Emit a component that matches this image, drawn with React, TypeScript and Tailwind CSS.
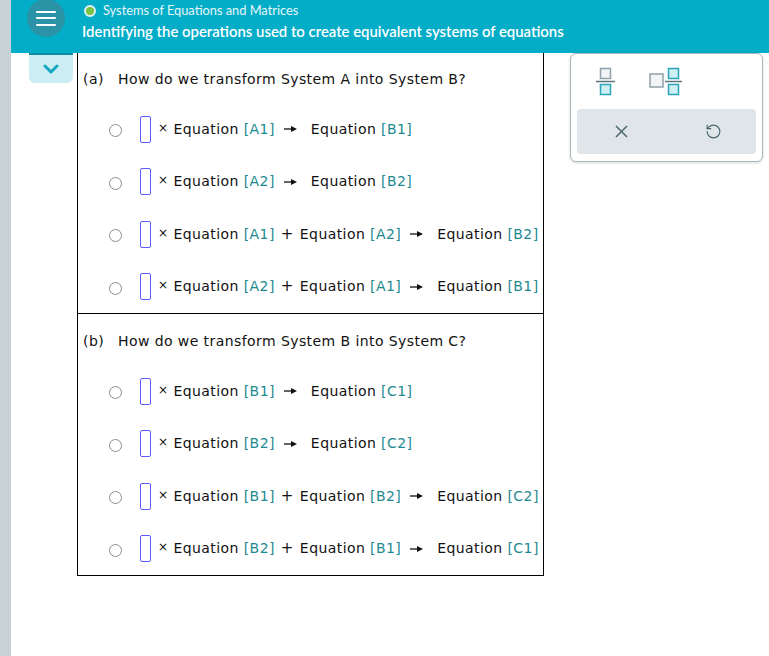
import { RotateCcw } from "lucide-react";

type Part = { eq: string } | { op: "+" } | { arrow: true };

type Row = Part[];

const sectionA: Row[] = [
  [{ eq: "A1" }, { arrow: true }, { eq: "B1" }],
  [{ eq: "A2" }, { arrow: true }, { eq: "B2" }],
  [{ eq: "A1" }, { op: "+" }, { eq: "A2" }, { arrow: true }, { eq: "B2" }],
  [{ eq: "A2" }, { op: "+" }, { eq: "A1" }, { arrow: true }, { eq: "B1" }],
];

const sectionB: Row[] = [
  [{ eq: "B1" }, { arrow: true }, { eq: "C1" }],
  [{ eq: "B2" }, { arrow: true }, { eq: "C2" }],
  [{ eq: "B1" }, { op: "+" }, { eq: "B2" }, { arrow: true }, { eq: "C2" }],
  [{ eq: "B2" }, { op: "+" }, { eq: "B1" }, { arrow: true }, { eq: "C1" }],
];

function Arrow() {
  return (
    <svg width="14" height="8" viewBox="0 0 14 8" className="ml-[9px] mr-[13px]">
      <line x1="0" y1="4" x2="9" y2="4" stroke="#111" strokeWidth="1.3" />
      <path d="M7 1 L13 4 L7 7 Z" fill="#111" />
    </svg>
  );
}

function Equation({ id }: { id: string }) {
  return (
    <span>
      Equation <span className="text-[#1e8a8f]">[{id}]</span>
    </span>
  );
}

function OptionRow({ row }: { row: Row }) {
  return (
    <div className="flex h-[52.5px] items-center pl-[31px]">
      <span className="mt-[3px] h-[13px] w-[13px] rounded-full border border-[#8c8c8c] bg-white" />
      <span className="ml-[18px] h-[27px] w-[11px] rounded-[2px] border border-[#5a5aff]" />
      <span className="mb-[3px] ml-[7px] mr-[5px] text-[12px]">×</span>
      {row.map((p, i) => {
        if ("eq" in p) return <Equation key={i} id={p.eq} />;
        if ("op" in p) return <span key={i} className="mx-[6px] text-[15px] leading-none">+</span>;
        return <Arrow key={i} />;
      })}
    </div>
  );
}

function Section({ label, title, rows, divider }: { label: string; title: string; rows: Row[]; divider?: boolean }) {
  return (
    <div className={divider ? "border-t border-black pt-[17px]" : "pt-[16px]"}>
      <div className="flex h-[20px] items-center pl-[5px]">
        <span className="w-[35px]">({label})</span>
        <span>{title}</span>
      </div>
      <div className="mt-[14px]">
        {rows.map((r, i) => (
          <OptionRow key={i} row={r} />
        ))}
      </div>
    </div>
  );
}

function FractionIcon() {
  return (
    <svg width="20" height="30" viewBox="0 0 20 30">
      <rect x="4.5" y="1.5" width="10" height="10" fill="#f2f5f6" stroke="#8fa1a8" strokeWidth="1.5" />
      <line x1="0" y1="14.5" x2="19" y2="14.5" stroke="#5d737b" strokeWidth="1.5" />
      <rect x="4.5" y="17.5" width="10" height="10" fill="#cdeef3" stroke="#2aa6b8" strokeWidth="1.5" />
    </svg>
  );
}

function MixedIcon() {
  return (
    <svg width="34" height="30" viewBox="0 0 34 30">
      <rect x="1" y="7" width="13" height="13" fill="#f2f5f6" stroke="#8fa1a8" strokeWidth="1.5" />
      <rect x="19.5" y="1.5" width="10" height="10" fill="#cdeef3" stroke="#2aa6b8" strokeWidth="1.5" />
      <line x1="16" y1="14.5" x2="33" y2="14.5" stroke="#5d737b" strokeWidth="1.5" />
      <rect x="19.5" y="17.5" width="10" height="10" fill="#cdeef3" stroke="#2aa6b8" strokeWidth="1.5" />
    </svg>
  );
}

export default function App() {
  return (
    <div className="flex h-[656px] w-[769px] overflow-hidden bg-white">
      <div className="w-[11px] shrink-0 bg-[#c7d2d7]" />
      <div className="flex min-w-0 flex-1 flex-col">
        <header className="flex h-[53px] shrink-0 items-start bg-[#03acc7] font-['Lato',sans-serif] text-white">
          <div className="ml-[16px] mt-[-1px] flex h-[38px] w-[38px] flex-col items-center justify-center gap-[4.5px] rounded-full bg-[#2b93a6]">
            <span className="h-[2px] w-[20px] rounded bg-white" />
            <span className="h-[2px] w-[20px] rounded bg-white" />
            <span className="h-[2px] w-[20px] rounded bg-white" />
          </div>
          <div className="ml-[17px] flex flex-col">
            <div className="mt-[3px] flex h-[16px] items-center">
              <span className="ml-[2px] h-[12px] w-[12px] rounded-full border-2 border-[#dff3f6] bg-[#7bc142]" />
              <span className="ml-[7px] text-[12.8px] text-[#e6f7fa]">Systems of Equations and Matrices</span>
            </div>
            <div className="mt-[2px] text-[14.9px] font-semibold leading-[20px]">
              Identifying the operations used to create equivalent systems of equations
            </div>
          </div>
        </header>

        <div className="flex items-start">
          <div className="ml-[18px] flex h-[30px] w-[44px] items-center justify-center rounded-b-[6px] border-t-2 border-[#0c8ba0] bg-[#ccedf2]">
            <svg width="16" height="10" viewBox="0 0 16 10">
              <path d="M2 2 L8 8 L14 2" fill="none" stroke="#12a6c0" strokeWidth="3" strokeLinecap="round" strokeLinejoin="round" />
            </svg>
          </div>
          <div className="ml-[4px] w-[467px] border-x border-b border-black font-['DejaVu_Sans',sans-serif] text-[14px] tracking-[0.42px] text-[#111]">
            <Section label="a" title="How do we transform System A into System B?" rows={sectionA} />
            <Section label="b" title="How do we transform System B into System C?" rows={sectionB} divider />
          </div>
          <div className="ml-[26px] w-[193px] rounded-[6px] border border-[#a9b9c0] bg-white px-[6px] pb-[7px] shadow-[0_1px_3px_rgba(0,0,0,0.15)]">
            <div className="flex h-[55px] items-center">
              <div className="ml-[19px]">
                <FractionIcon />
              </div>
              <div className="ml-[33px]">
                <MixedIcon />
              </div>
            </div>
            <div className="flex h-[45px] items-center rounded-[4px] bg-[#dfe5e8] text-[#4b6770]">
              <svg width="13" height="13" viewBox="0 0 13 13" className="ml-[38px]">
                <path d="M1 1 L12 12 M12 1 L1 12" stroke="#4b6770" strokeWidth="1.5" />
              </svg>
              <RotateCcw className="ml-[77px]" size={17} strokeWidth={1.6} />
            </div>
          </div>
        </div>
      </div>
    </div>
  );
}
